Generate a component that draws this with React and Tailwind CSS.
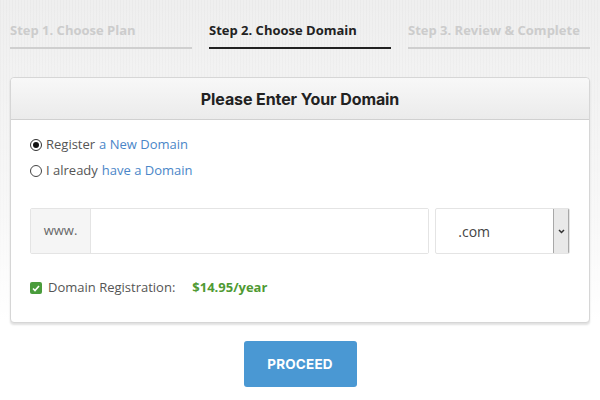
import React from "react";

const steps = [
  { label: "Step 1. Choose Plan", active: false },
  { label: "Step 2. Choose Domain", active: true },
  { label: "Step 3. Review & Complete", active: false },
];

export default function App() {
  return (
    <div className="w-[600px] h-[400px] overflow-hidden bg-[#efefef] bg-[repeating-linear-gradient(90deg,rgba(0,0,0,0.02)_0px,rgba(0,0,0,0.02)_1px,transparent_1px,transparent_3px)] font-['Open_Sans',sans-serif]">
      <div className="h-full bg-gradient-to-b from-transparent via-[#ffffff99] via-55% to-white to-80%">
        {/* Steps */}
        <div className="flex gap-[17px] px-[10px] pt-[20px]">
          {steps.map((s) => (
            <div
              key={s.label}
              className={`w-[182px] pb-[7px] border-b-2 text-[13px] font-bold leading-[20px] ${
                s.active ? "border-[#222] text-[#222]" : "border-[#cfcfcf] text-[#cccccc]"
              }`}
            >
              {s.label}
            </div>
          ))}
        </div>

        {/* Card */}
        <div className="mx-[10px] mt-[28px] bg-white border border-[#d6d6d6] rounded-[4px] shadow-[0_2px_2px_rgba(0,0,0,0.12)]">
          <div className="h-[42px] flex items-center justify-center rounded-t-[4px] border-b border-[#d0d0d0] bg-gradient-to-b from-[#f8f8f8] to-[#ebebeb]">
            <h2 className="text-[16px] font-bold text-[#222] font-['Inter',sans-serif] tracking-[-0.1px]">
              Please Enter Your Domain
            </h2>
          </div>

          <div className="px-[19px] pt-[16px] pb-[24px] text-[13px] text-[#555]">
            <div className="flex flex-col gap-[8px]">
              <label className="flex items-center gap-[4px] h-[18px]">
                <span className="w-[12px] h-[12px] rounded-full border border-[#333] flex items-center justify-center">
                  <span className="w-[6px] h-[6px] rounded-full bg-[#111]" />
                </span>
                Register <span className="text-[#4a86c8]">a New Domain</span>
              </label>
              <label className="flex items-center gap-[4px] h-[18px]">
                <span className="w-[12px] h-[12px] rounded-full border border-[#444]" />
                I already <span className="text-[#4a86c8]">have a Domain</span>
              </label>
            </div>

            <div className="flex gap-[6px] mt-[28px]">
              <div className="flex w-[400px] h-[46px] border border-[#e4e4e4] rounded-[2px]">
                <div className="w-[60px] flex items-center justify-center bg-[#f5f5f5] border-r border-[#e4e4e4] text-[#666] text-[13px]">
                  www.
                </div>
                <div className="flex-1 bg-white" />
              </div>
              <div className="flex w-[135px] h-[46px] border border-[#e4e4e4] rounded-[2px] overflow-hidden">
                <div className="flex-1 flex items-center pl-[22px] text-[#444] text-[14px]">.com</div>
                <div className="w-[16px] -my-px flex items-center justify-center bg-[#e9e9e9] border border-[#a8a8a8]">
                  <svg width="7" height="5" viewBox="0 0 7 5">
                    <path d="M1 1l2.5 2.5L6 1" fill="none" stroke="#333" strokeWidth="1.5" />
                  </svg>
                </div>
              </div>
            </div>

            <div className="flex items-center mt-[24px] h-[20px]">
              <span className="w-[12px] h-[12px] rounded-[2px] bg-[#4a9c3c] flex items-center justify-center">
                <svg width="8" height="7" viewBox="0 0 8 7">
                  <path d="M1 3.5l2 2L7 1" fill="none" stroke="white" strokeWidth="1.6" />
                </svg>
              </span>
              <span className="ml-[6px] text-[#555]">Domain Registration:</span>
              <span className="ml-[17px] font-bold text-[#4f9a33]">$14.95/year</span>
            </div>
          </div>
        </div>

        {/* Button */}
        <div className="flex justify-center mt-[18px]">
          <button className="w-[113px] h-[46px] rounded-[3px] bg-[#4a98d3] text-white text-[13.5px] font-bold font-['Inter',sans-serif] tracking-[0.2px]">
            PROCEED
          </button>
        </div>
      </div>
    </div>
  );
}
